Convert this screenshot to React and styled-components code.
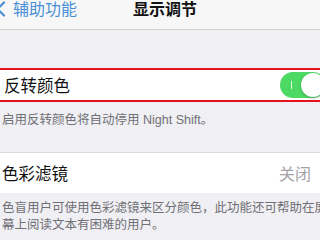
import styled, { createGlobalStyle } from 'styled-components'

const GlobalStyle = createGlobalStyle`
	body{
		margin:0;
		background:#efeff4;
		overflow:hidden;
		font-family:"Noto Sans CJK SC","Noto Sans",sans-serif;
	}
`

const Page = styled.div`
	width:356px;
	margin-left:-13px;
	background:#efeff4;
`

const NavBar = styled.div`
	height:29px;
	display:grid;
	grid-template-columns:1fr auto 1fr;
	align-items:start;
	background:#f7f7f8;
	border-bottom:1px solid #cfcfd3;
`

const Back = styled.a`
	display:flex;
	align-items:center;
	gap:7px;
	padding-left:8px;
	color:#4a8fd6;
	font-size:16px;
	line-height:17px;
	text-decoration:none;
`

const Title = styled.div`
	font-size:16px;
	line-height:17px;
	font-weight:600;
	color:#111;
`

const Group = styled.div`
	margin-top:${props => props.gap}px;
`

const Row = styled.div`
	display:flex;
	align-items:center;
	justify-content:space-between;
	height:${props => props.h}px;
	box-sizing:border-box;
	padding:0 15px;
	background:#fff;
	border:${props => props.marked ? '2.5px solid #e4121c' : 'none'};
	border-top:${props => props.marked ? '' : '1px solid #dcdce0'};
`

const Label = styled.span`
	font-size:16.5px;
	color:#111;
`

const Value = styled.span`
	font-size:16px;
	color:#a3a3a8;
	margin-right:17px;
`

const Switch = styled.div`
	width:46px;
	height:26px;
	border-radius:13px;
	background:#4cd964;
	position:relative;
	display:flex;
	align-items:center;
	justify-content:flex-end;
	padding:1px;
	box-sizing:border-box;
	&::before{
		content:'';
		position:absolute;
		left:11px;
		top:9px;
		width:1px;
		height:8px;
		background:rgba(255,255,255,0.8);
	}
`

const Knob = styled.div`
	width:24px;
	height:24px;
	border-radius:50%;
	background:#fff;
	box-shadow:0 1px 3px rgba(0,0,0,0.25);
`

const Note = styled.p`
	margin:0;
	padding:${props => props.pad};
	font-family:"Liberation Sans","Noto Sans CJK SC",sans-serif;
	font-size:12.5px;
	line-height:${props => props.lh}px;
	color:#707075;
`

function App(){
	return(
		<>
			<GlobalStyle />
			<Page>
				<NavBar>
					<Back href="#">
						<svg width="11" height="16" viewBox="0 0 11 16">
							<path d="M9 1.5 L2.5 8 L9 14.5" fill="none" stroke="#4a8fd6" strokeWidth="2.2" strokeLinecap="round" strokeLinejoin="round" />
						</svg>
						辅助功能
					</Back>
					<Title>显示调节</Title>
					<div />
				</NavBar>

				<Group gap={38}>
					<Row h={34} marked>
						<Label>反转颜色</Label>
						<Switch><Knob /></Switch>
					</Row>
					<Note pad="9px 15px 0" lh={18}>启用反转颜色将自动停用 Night Shift。</Note>
				</Group>

				<Group gap={23}>
					<Row h={41}>
						<Label>色彩滤镜</Label>
						<Value>关闭</Value>
					</Row>
					<Note pad="7px 12px 0 15px" lh={17}>色盲用户可使用色彩滤镜来区分颜色，此功能还可帮助在屏幕上阅读文本有困难的用户。</Note>
				</Group>
			</Page>
		</>
	)
}

export default App
